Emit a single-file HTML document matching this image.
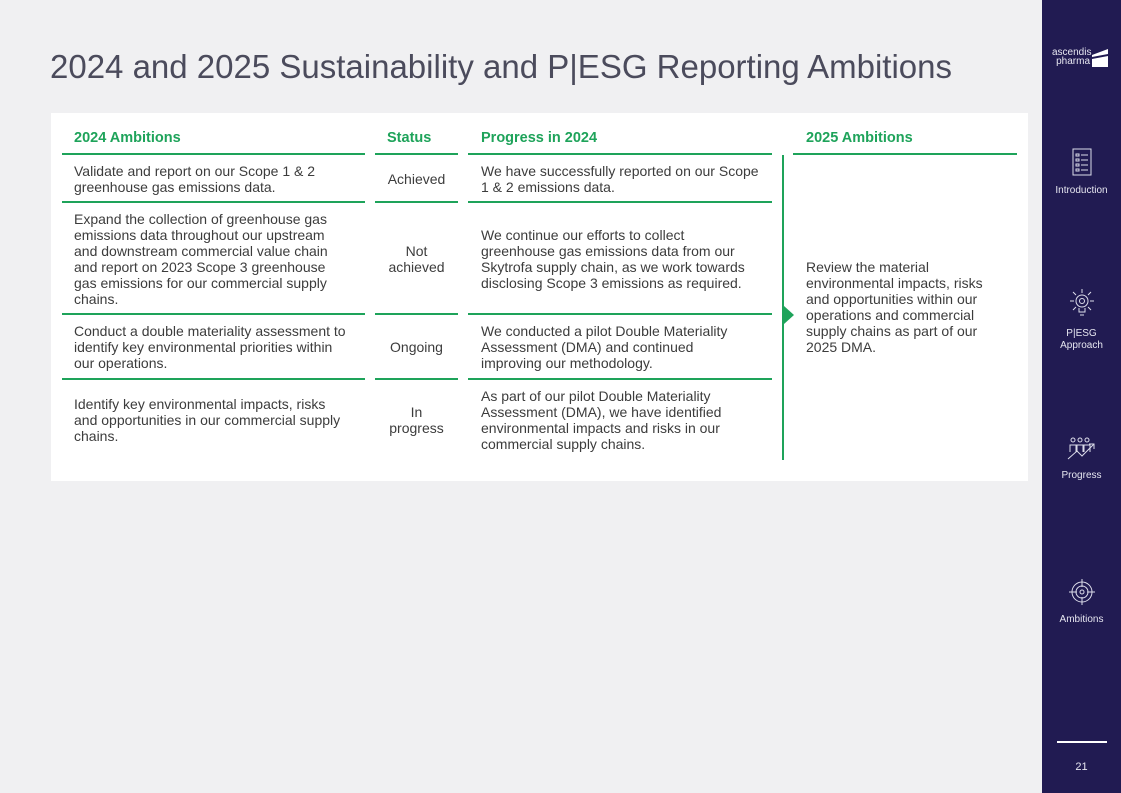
<!DOCTYPE html>
<html><head><meta charset="utf-8"><style>
*{margin:0;padding:0;box-sizing:border-box}
body{width:1121px;height:793px;background:#f0f0f2;position:relative;overflow:hidden;font-family:"Liberation Sans",sans-serif;color:#3c3c3c}
.t{position:absolute;font-size:14px;line-height:16px;white-space:nowrap}
.h{position:absolute;font-size:14.5px;font-weight:bold;color:#1ea35a;top:130px}
.l{position:absolute;height:2px;background:#1ea35a}
.c{text-align:center}
#side{position:absolute;left:1042px;top:0;width:79px;height:793px;background:#211b52;color:#e6e6f0}
.sl{position:absolute;width:79px;text-align:center;font-size:10px;line-height:12px;left:0}
</style></head><body>
<div style="position:absolute;left:50px;top:48px;font-size:33px;color:#4b4b5c;white-space:nowrap">2024 and 2025 Sustainability and P|ESG Reporting Ambitions</div>
<div style="position:absolute;left:51px;top:113px;width:977px;height:368px;background:#fff"></div>
<div class="h" style="left:74px">2024 Ambitions</div>
<div class="h" style="left:387px">Status</div>
<div class="h" style="left:481px">Progress in 2024</div>
<div class="h" style="left:806px">2025 Ambitions</div>
<div class="l" style="left:62px;top:153px;width:303px"></div>
<div class="l" style="left:375px;top:153px;width:83px"></div>
<div class="l" style="left:468px;top:153px;width:304px"></div>
<div class="l" style="left:793px;top:153px;width:224px"></div>
<div class="l" style="left:62px;top:201px;width:303px"></div>
<div class="l" style="left:375px;top:201px;width:83px"></div>
<div class="l" style="left:468px;top:201px;width:304px"></div>
<div class="l" style="left:62px;top:313px;width:303px"></div>
<div class="l" style="left:375px;top:313px;width:83px"></div>
<div class="l" style="left:468px;top:313px;width:304px"></div>
<div class="l" style="left:62px;top:378px;width:303px"></div>
<div class="l" style="left:375px;top:378px;width:83px"></div>
<div class="l" style="left:468px;top:378px;width:304px"></div>
<div style="position:absolute;left:782px;top:155px;width:2px;height:305px;background:#1ea35a"></div>
<div style="position:absolute;left:784px;top:306px;width:0;height:0;border-top:9px solid transparent;border-bottom:9px solid transparent;border-left:10px solid #1ea35a"></div>

<div class="t" style="left:74px;top:163px">Validate and report on our Scope 1 &amp; 2<br>greenhouse gas emissions data.</div>
<div class="t c" style="left:375px;width:83px;top:171px">Achieved</div>
<div class="t" style="left:481px;top:163px">We have successfully reported on our Scope<br>1 &amp; 2 emissions data.</div>

<div class="t" style="left:74px;top:211px">Expand the collection of greenhouse gas<br>emissions data throughout our upstream<br>and downstream commercial value chain<br>and report on 2023 Scope 3 greenhouse<br>gas emissions for our commercial supply<br>chains.</div>
<div class="t c" style="left:375px;width:83px;top:243px">Not<br>achieved</div>
<div class="t" style="left:481px;top:227px">We continue our efforts to collect<br>greenhouse gas emissions data from our<br>Skytrofa supply chain, as we work towards<br>disclosing Scope 3 emissions as required.</div>

<div class="t" style="left:74px;top:323px">Conduct a double materiality assessment to<br>identify key environmental priorities within<br>our operations.</div>
<div class="t c" style="left:375px;width:83px;top:339px">Ongoing</div>
<div class="t" style="left:481px;top:323px">We conducted a pilot Double Materiality<br>Assessment (DMA) and continued<br>improving our methodology.</div>

<div class="t" style="left:74px;top:396px">Identify key environmental impacts, risks<br>and opportunities in our commercial supply<br>chains.</div>
<div class="t c" style="left:375px;width:83px;top:404px">In<br>progress</div>
<div class="t" style="left:481px;top:388px">As part of our pilot Double Materiality<br>Assessment (DMA), we have identified<br>environmental impacts and risks in our<br>commercial supply chains.</div>

<div class="t" style="left:806px;top:259px">Review the material<br>environmental impacts, risks<br>and opportunities within our<br>operations and commercial<br>supply chains as part of our<br>2025 DMA.</div>

<div id="side">
 <div style="position:absolute;left:10px;top:48px;font-size:10px;line-height:9px;text-align:right;width:38px">ascendis<br>pharma</div>
 <svg style="position:absolute;left:48px;top:48px" width="20" height="20" viewBox="0 0 20 20"><path d="M2 7 L18 1 L18 6 L2 9Z M2 11 L18 8 L18 19 L2 19Z" fill="#fff"/></svg>
 <svg style="position:absolute;left:30px;top:148px" width="20" height="28" viewBox="0 0 20 28" fill="none" stroke="#dcdcea" stroke-width="1"><rect x="1" y="1" width="18" height="26"/><rect x="4" y="6" width="3" height="2"/><rect x="4" y="11" width="3" height="2"/><rect x="4" y="16" width="3" height="2"/><rect x="4" y="21" width="3" height="2"/><path d="M9 7h7M9 12h7M9 17h7M9 22h7"/></svg>
 <div class="sl" style="top:185px">Introduction</div>
 <svg style="position:absolute;left:27px;top:288px" width="26" height="30" viewBox="0 0 26 30" fill="none" stroke="#dcdcea" stroke-width="1"><circle cx="13" cy="13" r="6"/><circle cx="13" cy="13" r="2.5"/><path d="M13 1v4M1 13h4M21 13h4M4 4l3 3M22 4l-3 3M4 22l3-3M22 22l-3-3M10 20v4h6v-4M11 27h4"/></svg>
 <div class="sl" style="top:328px">P|ESG<br>Approach</div>
 <svg style="position:absolute;left:25px;top:437px" width="30" height="24" viewBox="0 0 30 24" fill="none" stroke="#dcdcea" stroke-width="1"><circle cx="6" cy="3" r="2"/><circle cx="13" cy="3" r="2"/><circle cx="20" cy="3" r="2"/><path d="M3 15V8h6v7M10 15V8h6v7M17 15V8h6v7M1 22l9-8 5 5 12-12M22 7h5v5"/></svg>
 <div class="sl" style="top:470px">Progress</div>
 <svg style="position:absolute;left:27px;top:578px" width="26" height="28" viewBox="0 0 26 28" fill="none" stroke="#dcdcea" stroke-width="1"><circle cx="13" cy="14" r="10"/><circle cx="13" cy="14" r="6"/><circle cx="13" cy="14" r="2"/><path d="M13 1v8M13 19v8M0 14h8M18 14h8"/></svg>
 <div class="sl" style="top:614px">Ambitions</div>
 <div style="position:absolute;left:15px;top:741px;width:50px;height:2px;background:#fff"></div>
 <div class="sl" style="top:761px;font-size:11px">21</div>
</div>
</body></html>
